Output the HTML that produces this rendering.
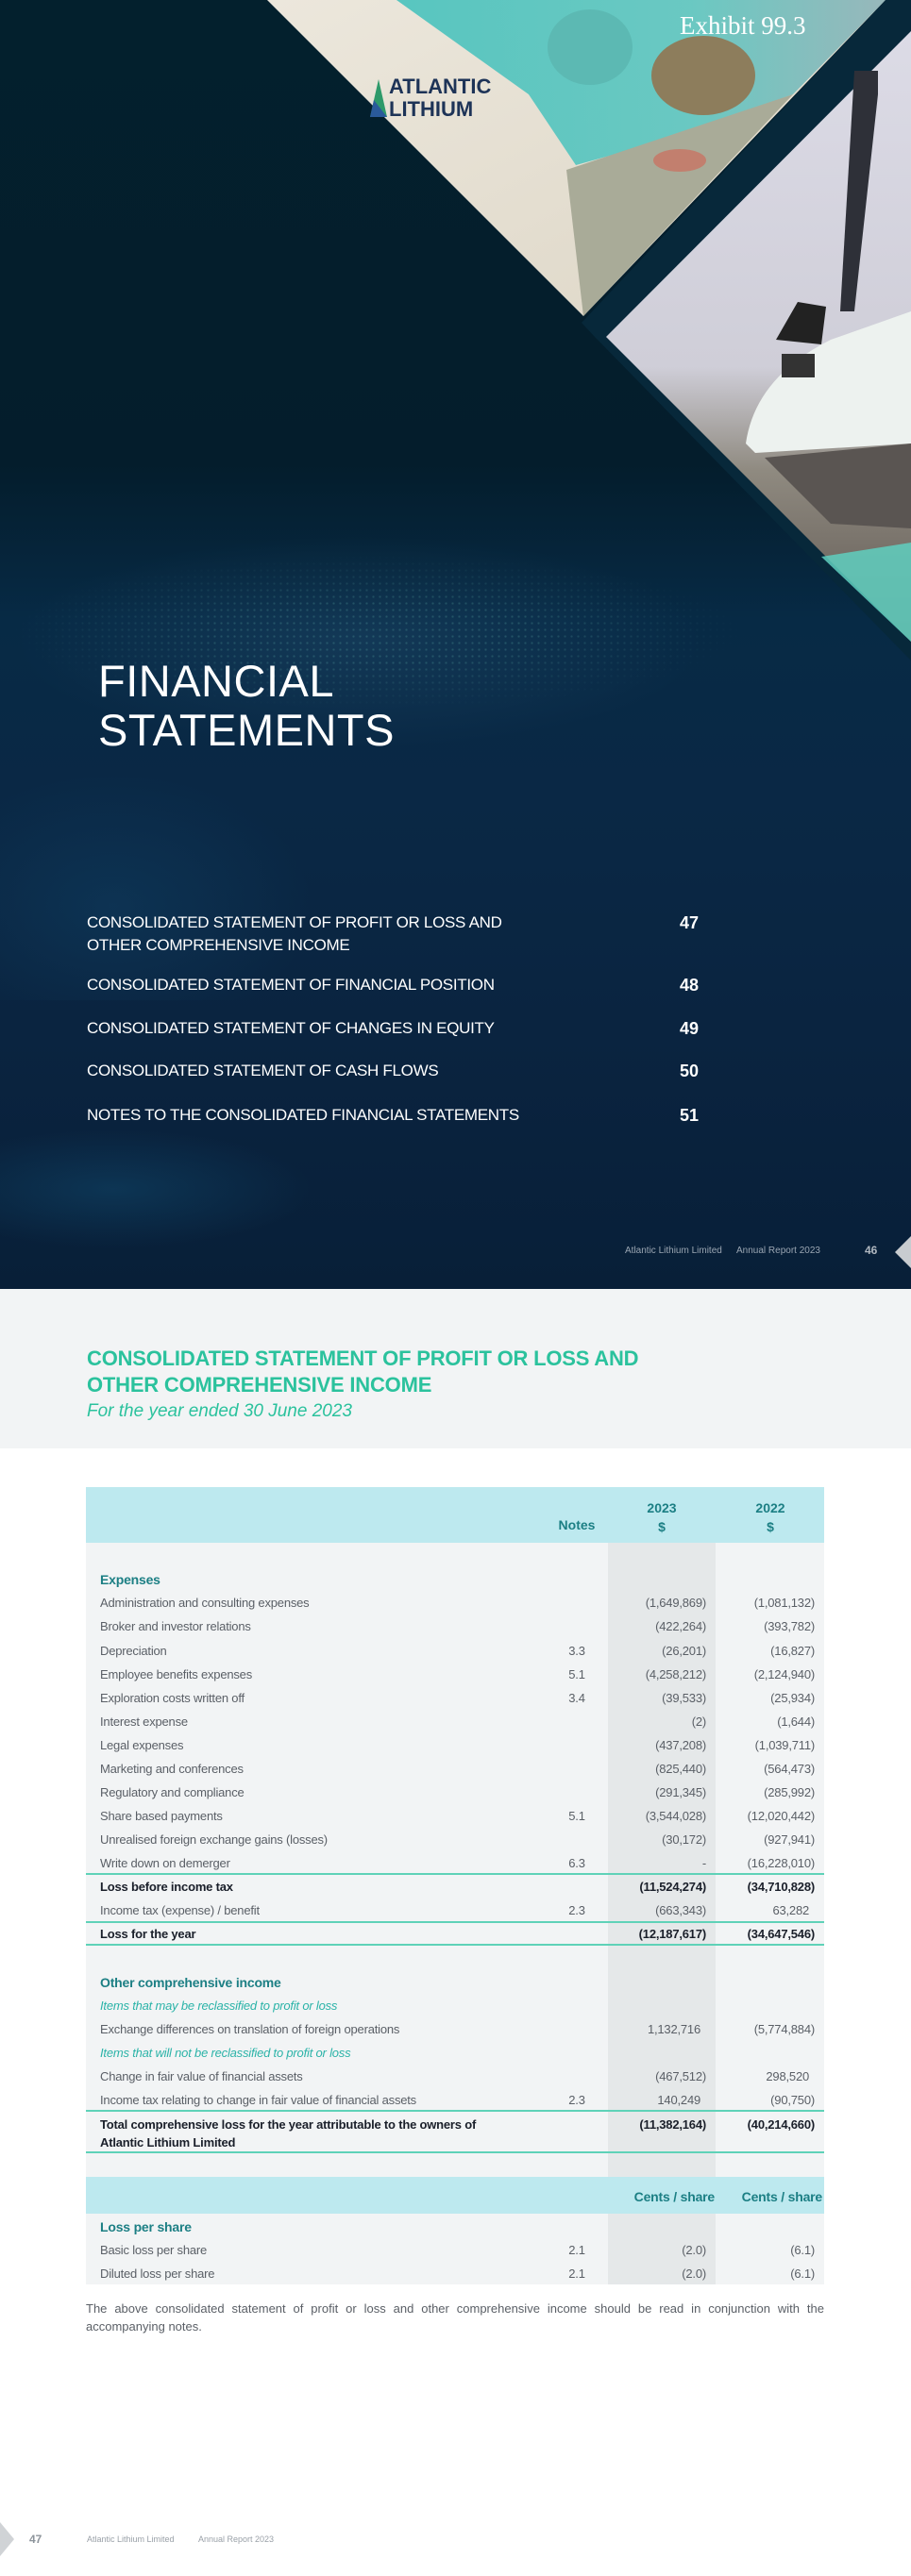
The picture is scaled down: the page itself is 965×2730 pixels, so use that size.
<!DOCTYPE html>
<html><head><meta charset="utf-8"><style>
*{margin:0;padding:0;box-sizing:border-box}
body{width:965px;height:2730px;position:relative;background:#fff;font-family:"Liberation Sans",sans-serif;overflow:hidden}
.a{position:absolute;white-space:nowrap}
.toc{position:absolute;left:92px;color:#fff;font-size:17px;letter-spacing:-0.3px;line-height:24px}
.pg{position:absolute;left:700px;width:40px;text-align:right;color:#fff;font-weight:bold;font-size:18px;line-height:24px}
.r{position:absolute;left:91px;width:782px;height:20px;line-height:20px;font-size:13px;color:#5a5f66;letter-spacing:-0.2px}
.r span{position:absolute;top:0}
.l{left:15px}
.n{left:490px;width:60px;text-align:center}
.v1{right:125px;text-align:right}
.v2{right:10px;text-align:right}
.b{font-weight:bold;color:#1a1f2a}
.h{font-weight:bold;color:#1c7f84;font-size:14px}
.i{font-style:italic;color:#2bb3a8}
.ln{position:absolute;left:91px;width:782px;height:2px;background:#5fd2b8}
</style></head><body>

<!-- cover -->
<div class="a" style="left:0;top:0;width:965px;height:1366px;background:linear-gradient(180deg,#03202d 0%,#041d2c 36%,#072a45 48%,#0a2845 62%,#0a2440 80%,#081f38 100%)"></div>
<div class="a" style="left:0;top:560px;width:965px;height:500px;background:radial-gradient(ellipse 520px 160px at 380px 120px,rgba(60,110,150,0.22),rgba(0,0,0,0) 70%),radial-gradient(ellipse 300px 200px at 120px 400px,rgba(20,80,120,0.3),rgba(0,0,0,0) 70%)"></div>
<div class="a" style="left:0;top:580px;width:965px;height:300px;opacity:0.22;background-image:radial-gradient(circle,#6fc8b8 1px,transparent 1.3px);background-size:7px 7px;-webkit-mask-image:radial-gradient(ellipse 520px 110px at 400px 90px,#000 30%,transparent 75%);mask-image:radial-gradient(ellipse 520px 110px at 400px 90px,#000 30%,transparent 75%)"></div>
<div class="a" style="left:0;top:1180px;width:965px;height:186px;background:radial-gradient(ellipse 300px 90px at 120px 80px,rgba(20,90,130,0.35),rgba(0,0,0,0) 70%)"></div>

<svg class="a" style="left:0;top:0" width="965" height="700" viewBox="0 0 965 700">
<defs>
<linearGradient id="cap" x1="0" y1="0" x2="1" y2="1"><stop offset="0" stop-color="#ece7dc"/><stop offset="1" stop-color="#ddd6c6"/></linearGradient>
<linearGradient id="sky" x1="0" y1="0" x2="0" y2="1"><stop offset="0" stop-color="#dcdbe6"/><stop offset="0.55" stop-color="#cfced8"/><stop offset="0.72" stop-color="#8f8a80"/><stop offset="1" stop-color="#5d5550"/></linearGradient>
<linearGradient id="tl" x1="0" y1="0" x2="1" y2="0"><stop offset="0" stop-color="#48c2bd"/><stop offset="0.6" stop-color="#5cc6c0"/><stop offset="1" stop-color="#8fb3b8"/></linearGradient>
</defs>
<polygon points="283,0 938,0 618,335" fill="url(#cap)"/>
<polygon points="420,0 938,0 840,100 700,150 610,175 560,100" fill="url(#tl)" opacity="0.9"/>
<polygon points="600,180 840,100 618,335" fill="#a9ab98"/>
<ellipse cx="625" cy="50" rx="45" ry="40" fill="#5cb9b3"/>
<ellipse cx="745" cy="80" rx="55" ry="42" fill="#8d7d5c"/>
<ellipse cx="720" cy="170" rx="28" ry="12" fill="#c27f6e"/>
<polygon points="938,0 965,0 965,33 642,357 965,680 965,700 630,357 616,342" fill="#07283a"/>
<polygon points="965,33 642,357 965,680" fill="url(#sky)"/>
<polygon points="905,75 930,75 930,100 905,330 890,330" fill="#2e3038"/>
<path d="M790 470 Q800 400 880 360 L965 330 L965 470 L800 480 Z" fill="#edf2ef"/>
<path d="M822 360 L845 320 L875 325 L870 365 Z" fill="#222"/>
<rect x="828" y="375" width="35" height="25" fill="#333"/>
<polygon points="810,485 965,470 965,560 880,555" fill="#5a5552"/>
<polygon points="870,590 965,575 965,680" fill="#5fcfc0" opacity="0.85"/>
</svg>
<div class="a" style="left:720px;top:12px;font-family:'Liberation Serif',serif;font-size:27px;color:#fff">Exhibit 99.3</div>
<div class="a" style="left:412px;top:80px;font-size:22px;font-weight:bold;color:#1d3357;line-height:24px">ATLANTIC<br>LITHIUM</div>
<svg class="a" style="left:392px;top:84px" width="18" height="40"><polygon points="9,0 18,40 0,40" fill="#2e9a6a"/><polygon points="4,22 18,40 0,40" fill="#2a5a9a"/></svg>

<div class="a" style="left:104px;top:696px;font-size:47px;color:#fff;line-height:52px;letter-spacing:0.5px">FINANCIAL<br>STATEMENTS</div>

<div class="toc" style="top:966px">CONSOLIDATED STATEMENT OF PROFIT OR LOSS AND<br>OTHER COMPREHENSIVE INCOME</div><div class="pg" style="top:966px">47</div>
<div class="toc" style="top:1032px">CONSOLIDATED STATEMENT OF FINANCIAL POSITION</div><div class="pg" style="top:1032px">48</div>
<div class="toc" style="top:1078px">CONSOLIDATED STATEMENT OF CHANGES IN EQUITY</div><div class="pg" style="top:1078px">49</div>
<div class="toc" style="top:1123px">CONSOLIDATED STATEMENT OF CASH FLOWS</div><div class="pg" style="top:1123px">50</div>
<div class="toc" style="top:1170px">NOTES TO THE CONSOLIDATED FINANCIAL STATEMENTS</div><div class="pg" style="top:1170px">51</div>

<div class="a" style="left:662px;top:1320px;font-size:10px;color:#9aa6b2">Atlantic Lithium Limited</div>
<div class="a" style="left:780px;top:1320px;font-size:10px;color:#9aa6b2">Annual Report 2023</div>
<div class="a" style="left:916px;top:1318px;font-size:12px;font-weight:bold;color:#b0b8c0">46</div>
<svg class="a" style="left:948px;top:1310px" width="17" height="34"><polygon points="17,0 17,34 0,17" fill="#c8ccd0"/></svg>

<!-- light header -->
<div class="a" style="left:0;top:1366px;width:965px;height:169px;background:#f2f4f5"></div>
<div class="a" style="left:92px;top:1426px;font-size:22px;font-weight:bold;color:#2bc29d;line-height:28px;letter-spacing:-0.2px">CONSOLIDATED STATEMENT OF PROFIT OR LOSS AND<br>OTHER COMPREHENSIVE INCOME</div>
<div class="a" style="left:92px;top:1485px;font-size:19px;font-style:italic;color:#2bc29d">For the year ended 30 June 2023</div>

<!-- table -->
<div class="a" style="left:91px;top:1576px;width:782px;height:59px;background:#bde9ef"></div>
<div class="a" style="left:91px;top:1635px;width:782px;height:672px;background:#f2f4f5"></div>
<div class="a" style="left:644px;top:1635px;width:114px;height:672px;background:#e5e8e9"></div>
<div class="a" style="left:91px;top:2307px;width:782px;height:39px;background:#bde9ef"></div>
<div class="a" style="left:91px;top:2346px;width:782px;height:75px;background:#f2f4f5"></div>
<div class="a" style="left:644px;top:2346px;width:114px;height:75px;background:#e5e8e9"></div>

<div class="a h" style="left:660px;top:1588px;width:82px;text-align:center;line-height:20px">2023<br>$</div>
<div class="a h" style="left:775px;top:1588px;width:82px;text-align:center;line-height:20px">2022<br>$</div>
<div class="a h" style="left:581px;top:1608px;width:60px;text-align:center">Notes</div>

<div class="r" style="top:1664px"><span class="l h">Expenses</span></div>
<div class="r" style="top:1689px"><span class="l">Administration and consulting expenses</span><span class="v1">(1,649,869)</span><span class="v2">(1,081,132)</span></div>
<div class="r" style="top:1714px"><span class="l">Broker and investor relations</span><span class="v1">(422,264)</span><span class="v2">(393,782)</span></div>
<div class="r" style="top:1740px"><span class="l">Depreciation</span><span class="n">3.3</span><span class="v1">(26,201)</span><span class="v2">(16,827)</span></div>
<div class="r" style="top:1765px"><span class="l">Employee benefits expenses</span><span class="n">5.1</span><span class="v1">(4,258,212)</span><span class="v2">(2,124,940)</span></div>
<div class="r" style="top:1790px"><span class="l">Exploration costs written off</span><span class="n">3.4</span><span class="v1">(39,533)</span><span class="v2">(25,934)</span></div>
<div class="r" style="top:1815px"><span class="l">Interest expense</span><span class="v1">(2)</span><span class="v2">(1,644)</span></div>
<div class="r" style="top:1840px"><span class="l">Legal expenses</span><span class="v1">(437,208)</span><span class="v2">(1,039,711)</span></div>
<div class="r" style="top:1865px"><span class="l">Marketing and conferences</span><span class="v1">(825,440)</span><span class="v2">(564,473)</span></div>
<div class="r" style="top:1890px"><span class="l">Regulatory and compliance</span><span class="v1">(291,345)</span><span class="v2">(285,992)</span></div>
<div class="r" style="top:1915px"><span class="l">Share based payments</span><span class="n">5.1</span><span class="v1">(3,544,028)</span><span class="v2">(12,020,442)</span></div>
<div class="r" style="top:1940px"><span class="l">Unrealised foreign exchange gains (losses)</span><span class="v1">(30,172)</span><span class="v2">(927,941)</span></div>
<div class="r" style="top:1965px"><span class="l">Write down on demerger</span><span class="n">6.3</span><span class="v1">-</span><span class="v2">(16,228,010)</span></div>
<div class="ln" style="top:1985px"></div>
<div class="r b" style="top:1990px"><span class="l">Loss before income tax</span><span class="v1">(11,524,274)</span><span class="v2">(34,710,828)</span></div>
<div class="r" style="top:2015px"><span class="l">Income tax (expense) / benefit</span><span class="n">2.3</span><span class="v1">(663,343)</span><span class="v2" style="right:16px">63,282</span></div>
<div class="ln" style="top:2036px"></div>
<div class="r b" style="top:2040px"><span class="l">Loss for the year</span><span class="v1">(12,187,617)</span><span class="v2">(34,647,546)</span></div>
<div class="ln" style="top:2060px"></div>

<div class="r" style="top:2091px"><span class="l h">Other comprehensive income</span></div>
<div class="r i" style="top:2116px"><span class="l">Items that may be reclassified to profit or loss</span></div>
<div class="r" style="top:2141px"><span class="l">Exchange differences on translation of foreign operations</span><span class="v1" style="right:131px">1,132,716</span><span class="v2">(5,774,884)</span></div>
<div class="r i" style="top:2166px"><span class="l">Items that will not be reclassified to profit or loss</span></div>
<div class="r" style="top:2191px"><span class="l">Change in fair value of financial assets</span><span class="v1">(467,512)</span><span class="v2" style="right:16px">298,520</span></div>
<div class="r" style="top:2216px"><span class="l">Income tax relating to change in fair value of financial assets</span><span class="n">2.3</span><span class="v1" style="right:131px">140,249</span><span class="v2">(90,750)</span></div>
<div class="ln" style="top:2236px"></div>
<div class="r b" style="top:2242px;height:40px"><span class="l" style="line-height:19px">Total comprehensive loss for the year attributable to the owners of<br>Atlantic Lithium Limited</span><span class="v1">(11,382,164)</span><span class="v2">(40,214,660)</span></div>
<div class="ln" style="top:2280px"></div>

<div class="r h" style="top:2318px"><span class="v1" style="right:116px">Cents / share</span><span class="v2" style="right:2px">Cents / share</span></div>
<div class="r" style="top:2350px"><span class="l h">Loss per share</span></div>
<div class="r" style="top:2375px"><span class="l">Basic loss per share</span><span class="n">2.1</span><span class="v1">(2.0)</span><span class="v2">(6.1)</span></div>
<div class="r" style="top:2400px"><span class="l">Diluted loss per share</span><span class="n">2.1</span><span class="v1">(2.0)</span><span class="v2">(6.1)</span></div>

<div class="a" style="left:91px;top:2437px;width:782px;white-space:normal;font-size:13px;line-height:19px;color:#5a5f66;text-align:justify;text-align-last:left">The above consolidated statement of profit or loss and other comprehensive income should be read in conjunction with the accompanying notes.</div>

<svg class="a" style="left:0;top:2673px" width="15" height="36"><polygon points="0,0 15,18 0,36" fill="#d0d3d6"/></svg>
<div class="a" style="left:31px;top:2684px;font-size:12px;font-weight:bold;color:#8d949b">47</div>
<div class="a" style="left:92px;top:2686px;font-size:9px;color:#9aa1a8">Atlantic Lithium Limited</div>
<div class="a" style="left:210px;top:2686px;font-size:9px;color:#9aa1a8">Annual Report 2023</div>
</body></html>
